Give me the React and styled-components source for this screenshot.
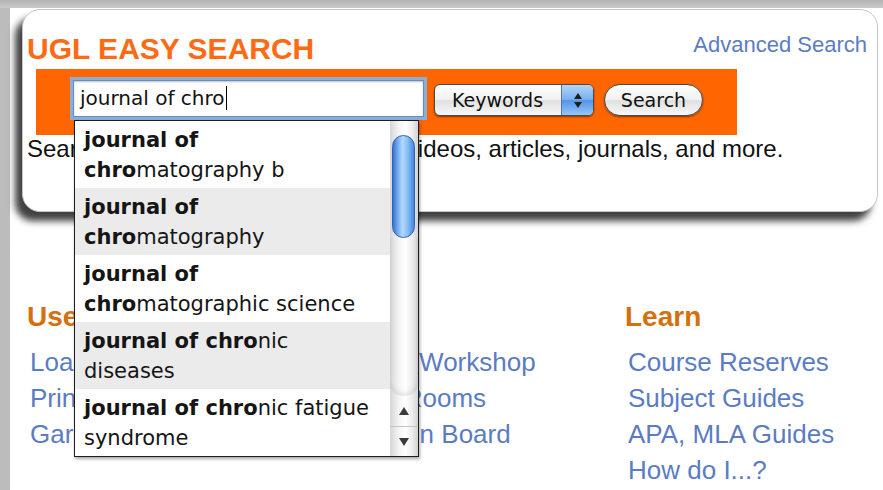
import React from 'react'
import styled, { createGlobalStyle } from 'styled-components'

const GlobalStyle = createGlobalStyle`
  html, body {
    margin: 0;
    padding: 0;
    background: #fff;
  }
  body {
    font-family: "Liberation Sans", Arial, sans-serif;
  }
`

const uiFont = `"DejaVu Sans", "Lucida Grande", sans-serif`
const linkBlue = '#5b7cc3'

const Frame = styled.div`
  width: 883px;
  height: 490px;
  box-sizing: border-box;
  padding: 8px 0 0 10px;
  overflow: hidden;
  background:
    linear-gradient(to bottom, #b2b2b2, #cacaca) top left / 100% 8px no-repeat,
    linear-gradient(to right, #bcbcbc, #e2e2e2);
`

const Sheet = styled.div`
  height: 100%;
  box-sizing: border-box;
  padding: 1px 5px 0 12px;
  background: #fff;
`

const Card = styled.section`
  position: relative;
  z-index: 1;
  height: 203px;
  box-sizing: border-box;
  padding: 24px 10px 0 4px;
  border: 1px solid #c6c6c6;
  border-radius: 18px;
  background: #fff;
  box-shadow: -7px 9px 7px rgba(0, 0, 0, 0.75);
`

const TitleRow = styled.div`
  display: flex;
  justify-content: space-between;
  align-items: flex-start;
`

const Title = styled.h1`
  margin: 0;
  font: 700 30px/30px "Liberation Sans", Arial, sans-serif;
  color: #ff6a14;
`

const TextLink = styled.a`
  font-size: ${p => p.$size || 22}px;
  line-height: ${p => p.$size || 22}px;
  color: ${linkBlue};
  text-decoration: none;
`

const Band = styled.div`
  display: flex;
  align-items: flex-start;
  gap: 10px;
  width: 701px;
  height: 66px;
  box-sizing: border-box;
  margin: 5px 0 0 9px;
  padding: 11px 0 0 37px;
  background: #ff6600;
`

const Field = styled.div`
  position: relative;
`

const QueryBox = styled.div`
  width: 351px;
  height: 37px;
  box-sizing: border-box;
  padding: 0 6px;
  border: 1px solid #6a8db8;
  background: #fff;
  box-shadow: 0 0 0 3px #88aedb, inset 0 1px 2px rgba(0, 0, 0, 0.25);
  font: 20px/35px ${uiFont};
  color: #111;
  white-space: nowrap;
`

const Caret = styled.span`
  display: inline-block;
  width: 1px;
  height: 24px;
  margin-left: 1px;
  vertical-align: -5px;
  background: #000;
`

const Select = styled.div`
  display: flex;
  width: 160px;
  height: 32px;
  box-sizing: border-box;
  margin-top: 4px;
  border: 1px solid #4a4a4a;
  border-radius: 6px;
  overflow: hidden;
  background: linear-gradient(#ffffff, #f1f1f1 48%, #e0e0e0 52%, #f7f7f7);
  box-shadow: 0 1px 2px rgba(0, 0, 0, 0.5);
  font: 19px/30px ${uiFont};
  color: #111;
`

const SelectLabel = styled.span`
  flex: 1;
  padding-left: 17px;
`

const SelectArrows = styled.span`
  display: flex;
  flex-direction: column;
  align-items: center;
  justify-content: center;
  gap: 3px;
  width: 31px;
  border-left: 1px solid #5078b4;
  background: linear-gradient(#b3d4f7, #79b1ef 48%, #5495e8 52%, #95c6f8);
`

const Tri = styled.span`
  width: 0;
  height: 0;
  border-left: 4px solid transparent;
  border-right: 4px solid transparent;
  ${p => (p.$down ? 'border-top' : 'border-bottom')}: 6px solid #1d1d1d;
`

const Button = styled.button`
  width: 99px;
  height: 32px;
  margin-top: 4px;
  padding: 0;
  border: 1px solid #4a4a4a;
  border-radius: 16px;
  background: linear-gradient(#ffffff, #f1f1f1 48%, #e0e0e0 52%, #f7f7f7);
  box-shadow: 0 1px 2px rgba(0, 0, 0, 0.5);
  font: 19px/30px ${uiFont};
  color: #111;
`

const Blurb = styled.p`
  margin: 0;
  font-size: 24px;
  line-height: 28px;
  color: #111;
  white-space: nowrap;
`

/* suggestion popup under the query box */
const Suggest = styled.div`
  position: absolute;
  z-index: 5;
  left: 1px;
  top: 40px;
  display: flex;
  width: 345px;
  height: 337px;
  box-sizing: border-box;
  border: 1px solid #1c1c1c;
  background: #fff;
  box-shadow: 1px 2px 3px rgba(0, 0, 0, 0.35);
`

const Options = styled.div`
  flex: 1;
  overflow: hidden;
`

const Option = styled.div`
  padding: 4px 8px 3px 9px;
  background: ${p => (p.$shaded ? '#ebebeb' : '#fff')};
  font: 21px/30px ${uiFont};
  color: #151515;
  white-space: nowrap;
`

const Track = styled.div`
  display: flex;
  flex-direction: column;
  width: 28px;
  background: linear-gradient(to right, #d6d6d6, #f3f3f3 30%, #ffffff 55%, #ececec 80%, #d2d2d2);
`

const Thumb = styled.div`
  width: 23px;
  height: 103px;
  box-sizing: border-box;
  margin: 14px 0 0 2px;
  border: 1px solid #2f63b3;
  border-radius: 12px;
  background: linear-gradient(to right, #3673d4, #78b0ef 25%, #b4d8ff 45%, #86bdf4 70%, #4586de);
`

const TrackFill = styled.div`
  flex: 1;
  border-radius: 0 0 13px 13px;
  box-shadow: inset 0 -4px 4px rgba(0, 0, 0, 0.08);
`

const ArrowButton = styled.div`
  display: flex;
  align-items: center;
  justify-content: center;
  height: ${p => (p.$down ? 29 : 30)}px;
  border-top: ${p => (p.$down ? '1px solid #c4c4c4' : 'none')};
`

const ArrowMark = styled(Tri)`
  border-left-width: 5px;
  border-right-width: 5px;
  ${p => (p.$down ? 'border-top' : 'border-bottom')}: 8px solid #3a3a3a;
`

const Columns = styled.div`
  display: grid;
  grid-template-columns: 300px 298px auto;
  margin-top: 89px;
  padding-left: 5px;
`

const ColTitle = styled.h2`
  margin: 0 0 15px;
  font: 700 28px/32px "Liberation Sans", Arial, sans-serif;
  color: #d4700f;
`

const LinkList = styled.ul`
  margin: 0;
  padding: 0 0 0 3px;
  list-style: none;
`

const LinkItem = styled.li`
  height: 36px;
  line-height: 36px;
`

const suggestions = [
  [['journal of', ''], ['chro', 'matography b']],
  [['journal of', ''], ['chro', 'matography']],
  [['journal of', ''], ['chro', 'matographic science']],
  [['journal of chro', 'nic'], ['', 'diseases']],
  [['journal of chro', 'nic fatigue'], ['', 'syndrome']],
]

const columns = [
  { title: 'Use', links: ['Loanable Technology', 'Printing', 'GarageBand Lab'] },
  { title: 'Meet', links: ['Writers Workshop', 'Study Rooms', 'Question Board'] },
  { title: 'Learn', links: ['Course Reserves', 'Subject Guides', 'APA, MLA Guides', 'How do I...?'] },
]

export default function App() {
  return (
    <>
      <GlobalStyle />
      <Frame>
        <Sheet>
          <Card>
            <TitleRow>
              <Title>UGL EASY SEARCH</Title>
              <TextLink href="#">Advanced Search</TextLink>
            </TitleRow>
            <Band>
              <Field>
                <QueryBox>
                  journal of chro<Caret />
                </QueryBox>
                <Suggest>
                  <Options>
                    {suggestions.map((lines, i) => (
                      <Option key={i} $shaded={i % 2 === 1}>
                        {lines.map(([bold, rest], j) => (
                          <div key={j}>
                            <b>{bold}</b>
                            {rest}
                          </div>
                        ))}
                      </Option>
                    ))}
                  </Options>
                  <Track>
                    <Thumb />
                    <TrackFill />
                    <ArrowButton>
                      <ArrowMark />
                    </ArrowButton>
                    <ArrowButton $down>
                      <ArrowMark $down />
                    </ArrowButton>
                  </Track>
                </Suggest>
              </Field>
              <Select>
                <SelectLabel>Keywords</SelectLabel>
                <SelectArrows>
                  <Tri />
                  <Tri $down />
                </SelectArrows>
              </Select>
              <Button>Search</Button>
            </Band>
            <Blurb>Search for books, e-books, games, videos, articles, journals, and more.</Blurb>
          </Card>
          <Columns>
            {columns.map(col => (
              <div key={col.title}>
                <ColTitle>{col.title}</ColTitle>
                <LinkList>
                  {col.links.map(l => (
                    <LinkItem key={l}>
                      <TextLink href="#" $size={26}>{l}</TextLink>
                    </LinkItem>
                  ))}
                </LinkList>
              </div>
            ))}
          </Columns>
        </Sheet>
      </Frame>
    </>
  )
}
